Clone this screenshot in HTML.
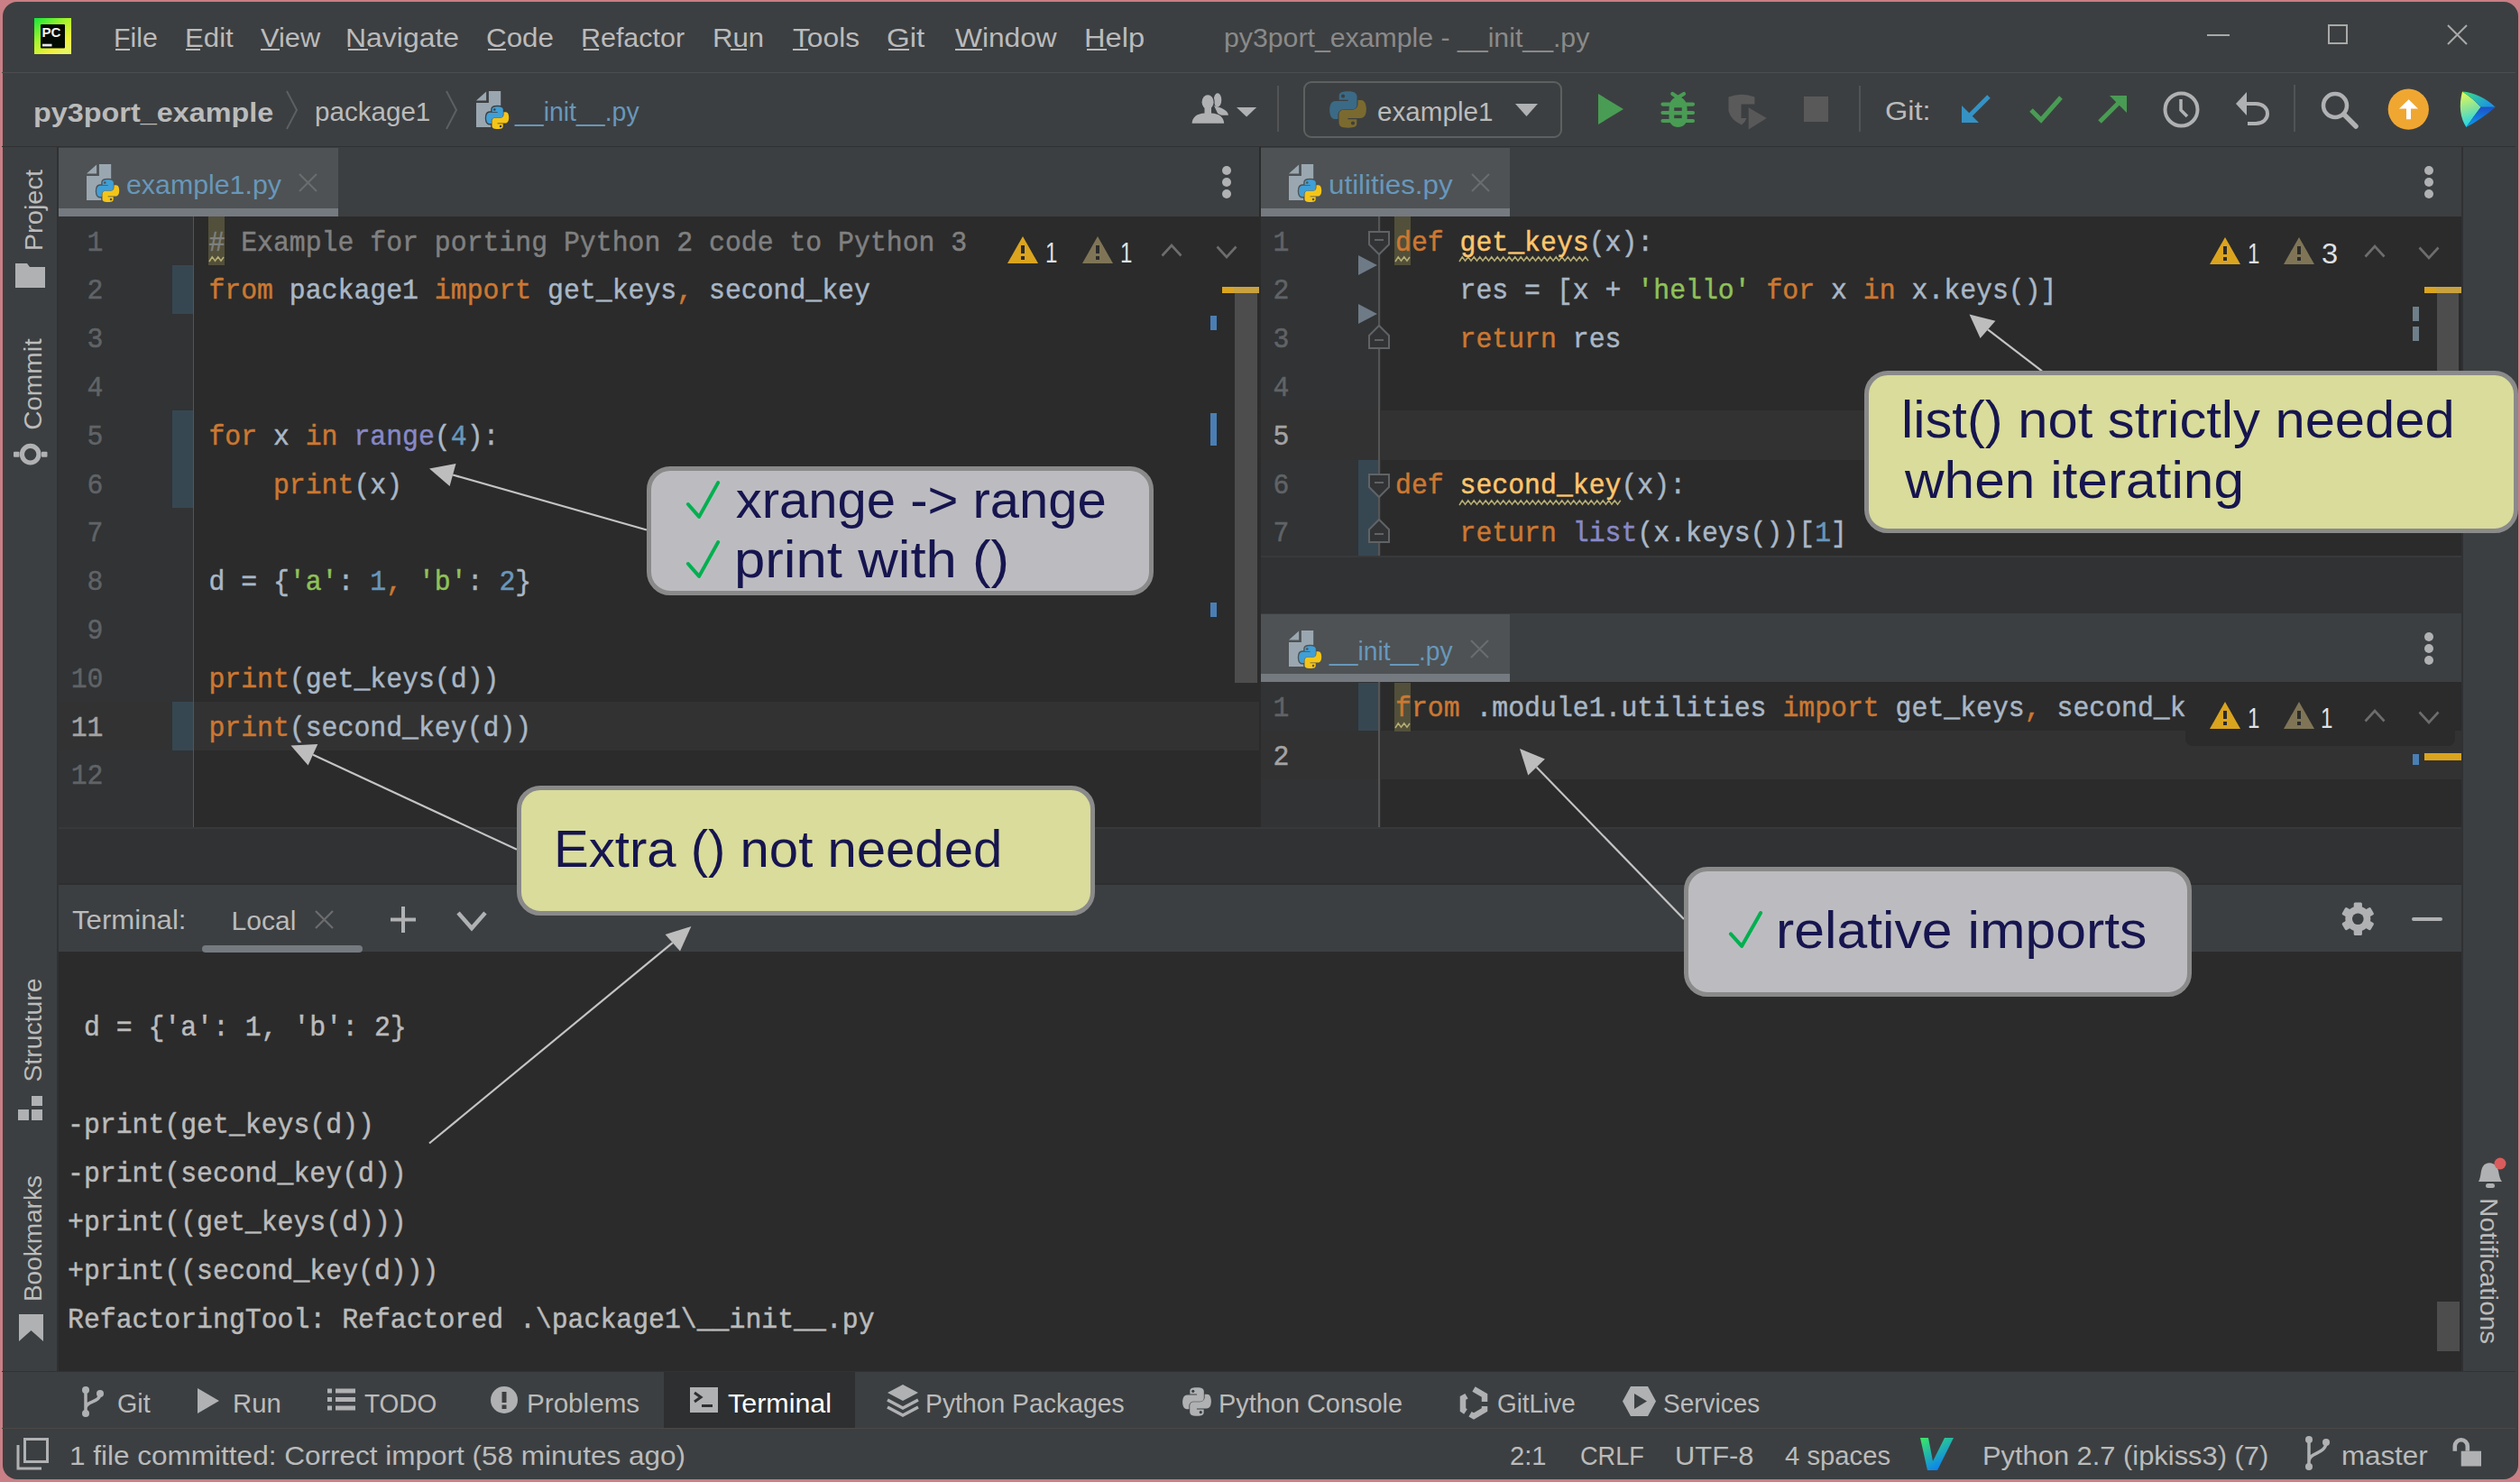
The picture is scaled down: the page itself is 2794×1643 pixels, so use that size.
<!DOCTYPE html>
<html><head><meta charset="utf-8">
<style>
html,body{margin:0;padding:0}
body{width:2794px;height:1643px;background:#c97f85;position:relative;overflow:hidden;font-family:"Liberation Sans",sans-serif}
.a{position:absolute}
.t{white-space:pre}
.m{-webkit-text-stroke-width:0.45px}
svg{overflow:visible}
</style></head><body>
<div class="a" style="left:2.5px;top:2.4px;width:2789px;height:1637.4px;background:#3c3f41;border-radius:16px"></div>
<div class="a" style="left:2px;top:80px;width:2787px;height:1px;background:#4b4c4d;"></div>
<div class="a" style="left:2px;top:162px;width:2787px;height:1px;background:#2f3133;"></div>
<div class="a" style="left:63px;top:163px;width:2px;height:1357px;background:#2f3133;"></div>
<div class="a" style="left:2729px;top:163px;width:2px;height:1357px;background:#2f3133;"></div>
<div class="a" style="left:65px;top:163px;width:1331px;height:76px;background:#3c3f41;"></div>
<div class="a" style="left:65px;top:164px;width:310px;height:75px;background:#4e5254;"></div>
<div class="a" style="left:65px;top:231px;width:310px;height:9px;background:#747a80;"></div>
<div class="a" style="left:65px;top:240px;width:149px;height:677px;background:#313335;"></div>
<div class="a" style="left:214px;top:240px;width:1px;height:677px;background:#555555;"></div>
<div class="a" style="left:215px;top:240px;width:1181px;height:677px;background:#2b2b2b;"></div>
<div class="a" style="left:65px;top:778px;width:149px;height:54px;background:#323232;"></div>
<div class="a" style="left:215px;top:778px;width:1181px;height:54px;background:#323232;"></div>
<div class="a" style="left:1396px;top:163px;width:2px;height:754px;background:#2b2b2b;"></div>
<div class="a" style="left:1398px;top:164px;width:276px;height:75px;background:#4e5254;"></div>
<div class="a" style="left:1398px;top:231px;width:276px;height:9px;background:#747a80;"></div>
<div class="a" style="left:1398px;top:240px;width:133px;height:376px;background:#313335;"></div>
<div class="a" style="left:1531px;top:240px;width:1198px;height:376px;background:#2b2b2b;"></div>
<div class="a" style="left:1531px;top:455px;width:1198px;height:55px;background:#323232;"></div>
<div class="a" style="left:1398px;top:455px;width:133px;height:55px;background:#323232;"></div>
<div class="a" style="left:1398px;top:616px;width:1331px;height:64px;background:#303234;"></div>
<div class="a" style="left:1398px;top:680px;width:1331px;height:76px;background:#3c3f41;"></div>
<div class="a" style="left:1398px;top:681px;width:276px;height:75px;background:#4e5254;"></div>
<div class="a" style="left:1398px;top:747px;width:276px;height:9px;background:#747a80;"></div>
<div class="a" style="left:1398px;top:756px;width:133px;height:161px;background:#313335;"></div>
<div class="a" style="left:1531px;top:756px;width:1198px;height:161px;background:#2b2b2b;"></div>
<div class="a" style="left:1531px;top:810px;width:1198px;height:54px;background:#323232;"></div>
<div class="a" style="left:1398px;top:810px;width:133px;height:54px;background:#323232;"></div>
<div class="a" style="left:65px;top:917px;width:2664px;height:63px;background:#303234;"></div>
<div class="a" style="left:65px;top:917px;width:2664px;height:2px;background:#38393b;"></div>
<div class="a" style="left:1398px;top:616px;width:1331px;height:2px;background:#38393b;"></div>
<div class="a" style="left:65px;top:979px;width:2664px;height:2px;background:#2c2e30;"></div>
<div class="a" style="left:65px;top:981px;width:2664px;height:74px;background:#3c3f41;"></div>
<div class="a" style="left:65px;top:1055px;width:2664px;height:465px;background:#2b2b2b;"></div>
<div class="a" style="left:2px;top:1520px;width:2787px;height:1px;background:#323232;"></div>
<div class="a" style="left:2px;top:1583px;width:2787px;height:1px;background:#4a4847;"></div>
<div class="a" style="left:736px;top:1521px;width:212px;height:62px;background:#2d2f30;"></div>
<svg class="a" style="left:38px;top:20px;" width="41" height="40" viewBox="0 0 41 40"><defs><linearGradient id="pcg" x1="0" y1="0" x2="0.75" y2="1"><stop offset="0" stop-color="#10e83a"/><stop offset="0.45" stop-color="#a6f52a"/><stop offset="0.8" stop-color="#f1f03a"/><stop offset="1" stop-color="#e8f560"/></linearGradient></defs><rect x="0" y="0" width="41" height="40" fill="url(#pcg)"/><rect x="7" y="7" width="27" height="26.5" rx="1" fill="#020a02"/><text x="8.5" y="20.8" font-family="Liberation Sans" font-weight="700" font-size="15.5" fill="#f2f2f2" textLength="21" lengthAdjust="spacingAndGlyphs">PC</text><rect x="9" y="28.7" width="10.5" height="2.8" fill="#e6e6e6"/></svg>
<div class="a" style="left:2447px;top:38px;width:25px;height:2px;background:#a9a9a9;"></div>
<div class="a" style="left:2581px;top:27px;width:22px;height:22px;background:transparent;border:2px solid #a9a9a9;box-sizing:border-box"></div>
<svg class="a" style="left:2713px;top:27px;" width="23" height="23" viewBox="0 0 23 23"><path d="M1 1 L22 22 M22 1 L1 22" stroke="#a9a9a9" stroke-width="2"/></svg>
<svg class="a" style="left:317px;top:101px;" width="13" height="42" viewBox="0 0 13 42"><path d="M1 0 L12 21 L1 42" fill="none" stroke="#5d5f61" stroke-width="2"/></svg>
<svg class="a" style="left:494px;top:101px;" width="13" height="42" viewBox="0 0 13 42"><path d="M1 0 L12 21 L1 42" fill="none" stroke="#5d5f61" stroke-width="2"/></svg>
<svg class="a" style="left:528px;top:101px;" width="28" height="40" viewBox="0 0 28 40"><path d="M0 10.4 L11.1 0.4 V10.4 Z" fill="#9aa7b0"/><path d="M13.9 0 H27.2 V40 H0 V13 H13.9 Z" fill="#9aa7b0"/></svg>
<svg class="a" style="left:537.7px;top:116.7px;" width="29" height="29" viewBox="0 0 29 29"><g transform="translate(1 1) scale(0.2292)"><g fill="#3c3f41" stroke="#3c3f41" stroke-width="12"><path d="M54.9 0.9 C50.3 0.9 45.9 1.3 42.1 2 C30.8 4 28.8 8.1 28.8 15.8 V26 H55.5 V29.4 H18.8 C11.1 29.4 4.3 34 2.2 42.9 C-0.2 53 -0.3 59.3 2.2 69.9 C4.1 77.8 8.6 83.4 16.3 83.4 H25.5 V71.3 C25.5 62.5 33.1 54.7 42.1 54.7 H68.8 C76.2 54.7 82.1 48.6 82.1 41.2 V15.8 C82.1 8.6 76 3.2 68.8 2 C64.2 1.2 59.5 0.9 54.9 0.9 Z"/><path d="M54.9 0.9 C50.3 0.9 45.9 1.3 42.1 2 C30.8 4 28.8 8.1 28.8 15.8 V26 H55.5 V29.4 H18.8 C11.1 29.4 4.3 34 2.2 42.9 C-0.2 53 -0.3 59.3 2.2 69.9 C4.1 77.8 8.6 83.4 16.3 83.4 H25.5 V71.3 C25.5 62.5 33.1 54.7 42.1 54.7 H68.8 C76.2 54.7 82.1 48.6 82.1 41.2 V15.8 C82.1 8.6 76 3.2 68.8 2 C64.2 1.2 59.5 0.9 54.9 0.9 Z" transform="rotate(180 55.2 55.2)"/></g><path d="M54.9 0.9 C50.3 0.9 45.9 1.3 42.1 2 C30.8 4 28.8 8.1 28.8 15.8 V26 H55.5 V29.4 H18.8 C11.1 29.4 4.3 34 2.2 42.9 C-0.2 53 -0.3 59.3 2.2 69.9 C4.1 77.8 8.6 83.4 16.3 83.4 H25.5 V71.3 C25.5 62.5 33.1 54.7 42.1 54.7 H68.8 C76.2 54.7 82.1 48.6 82.1 41.2 V15.8 C82.1 8.6 76 3.2 68.8 2 C64.2 1.2 59.5 0.9 54.9 0.9 Z" fill="#3f9fd6"/><path d="M54.9 0.9 C50.3 0.9 45.9 1.3 42.1 2 C30.8 4 28.8 8.1 28.8 15.8 V26 H55.5 V29.4 H18.8 C11.1 29.4 4.3 34 2.2 42.9 C-0.2 53 -0.3 59.3 2.2 69.9 C4.1 77.8 8.6 83.4 16.3 83.4 H25.5 V71.3 C25.5 62.5 33.1 54.7 42.1 54.7 H68.8 C76.2 54.7 82.1 48.6 82.1 41.2 V15.8 C82.1 8.6 76 3.2 68.8 2 C64.2 1.2 59.5 0.9 54.9 0.9 Z" fill="#f4c519" transform="rotate(180 55.2 55.2)"/><circle cx="40.5" cy="14.9" r="5.5" fill="#3c3f41"/><circle cx="69.9" cy="95.5" r="5.5" fill="#3c3f41"/></g></svg>
<svg class="a" style="left:1315px;top:98px;" width="50" height="44" viewBox="0 0 50 44"><ellipse cx="35" cy="12.8" rx="4.3" ry="7.6" fill="#afb1b3"/><path d="M31 19 L37 21 C43 23 46.5 26 46.9 29.7 L36 29.7 Z" fill="#afb1b3"/><g stroke="#3c3f41" stroke-width="2.2"><ellipse cx="24.1" cy="15.2" rx="6.5" ry="8" fill="#afb1b3"/><path d="M20.5 21 H28 V27.5 C36.5 28 41.8 31.5 42.2 38.8 H6.6 C7 31.5 12.5 28 20.5 27.5 Z" fill="#afb1b3"/></g><ellipse cx="24.1" cy="15.2" rx="6.5" ry="8" fill="#afb1b3"/><path d="M20.5 21 H28 V27.5 C36.5 28 41.8 31.5 42.2 38.8 H6.6 C7 31.5 12.5 28 20.5 27.5 Z" fill="#afb1b3"/></svg>
<svg class="a" style="left:1371px;top:119px;" width="23" height="11" viewBox="0 0 23 11"><path d="M0 0 H22.2 L11.1 10.4 Z" fill="#afb1b3"/></svg>
<div class="a" style="left:1416px;top:95px;width:2px;height:51px;background:#515354;"></div>
<div class="a" style="left:1445px;top:90px;width:287px;height:63px;border:2.5px solid #5e6060;border-radius:9px;box-sizing:border-box"></div>
<svg class="a" style="left:1473px;top:100px;" width="45" height="45" viewBox="0 0 45 45"><g transform="translate(1 1) scale(0.3714)"><path d="M54.9 0.9 C50.3 0.9 45.9 1.3 42.1 2 C30.8 4 28.8 8.1 28.8 15.8 V26 H55.5 V29.4 H18.8 C11.1 29.4 4.3 34 2.2 42.9 C-0.2 53 -0.3 59.3 2.2 69.9 C4.1 77.8 8.6 83.4 16.3 83.4 H25.5 V71.3 C25.5 62.5 33.1 54.7 42.1 54.7 H68.8 C76.2 54.7 82.1 48.6 82.1 41.2 V15.8 C82.1 8.6 76 3.2 68.8 2 C64.2 1.2 59.5 0.9 54.9 0.9 Z" fill="#3b6a86"/><path d="M54.9 0.9 C50.3 0.9 45.9 1.3 42.1 2 C30.8 4 28.8 8.1 28.8 15.8 V26 H55.5 V29.4 H18.8 C11.1 29.4 4.3 34 2.2 42.9 C-0.2 53 -0.3 59.3 2.2 69.9 C4.1 77.8 8.6 83.4 16.3 83.4 H25.5 V71.3 C25.5 62.5 33.1 54.7 42.1 54.7 H68.8 C76.2 54.7 82.1 48.6 82.1 41.2 V15.8 C82.1 8.6 76 3.2 68.8 2 C64.2 1.2 59.5 0.9 54.9 0.9 Z" fill="#7b6a2f" transform="rotate(180 55.2 55.2)"/><circle cx="40.5" cy="14.9" r="5.5" fill="#3c3f41"/><circle cx="69.9" cy="95.5" r="5.5" fill="#3c3f41"/></g></svg>
<svg class="a" style="left:1680px;top:115px;" width="25" height="14" viewBox="0 0 25 14"><path d="M0 0 H25 L12.5 14 Z" fill="#afb1b3"/></svg>
<svg class="a" style="left:1772px;top:104px;" width="29" height="34" viewBox="0 0 29 34"><path d="M0 0 L28 17 L0 34 Z" fill="#499c54"/></svg>
<svg class="a" style="left:1835px;top:95px;" width="50" height="50" viewBox="0 0 50 50"><path d="M19.3 9 L25.3 13 L32 9" fill="none" stroke="#499c54" stroke-width="4.2" stroke-linecap="round" stroke-linejoin="round"/><path d="M25.5 12.5 C31 12.5 35.6 17 35.6 26 V36 C35.6 42 31 46 25.5 46 C20 46 15.5 42 15.5 36 V26 C15.5 17 20 12.5 25.5 12.5 Z" fill="#499c54"/><path d="M8.5 20.6 H42 M8.5 30 H42 M8.5 39 H42" stroke="#499c54" stroke-width="4.2" stroke-linecap="round"/><rect x="21.2" y="24.3" width="8.5" height="3.6" fill="#3c3f41"/><rect x="21.2" y="32.5" width="8.5" height="3.6" fill="#3c3f41"/></svg>
<svg class="a" style="left:1835px;top:95px;" width="130" height="50" viewBox="0 0 130 50"><path d="M81.5 12.5 Q96 7 110.4 12.5 V20.5 H95.5 V36 H101.5 Q100 40.5 96 43.5 Q84 38 81.5 28 Z" fill="#5a5a5a"/><path d="M103.7 24.3 L123.8 36 L103.7 48.5 Z" fill="#585858"/></svg>
<div class="a" style="left:2000px;top:107px;width:27px;height:28px;background:#595959;"></div>
<div class="a" style="left:2061px;top:95px;width:2px;height:51px;background:#515354;"></div>
<svg class="a" style="left:2175px;top:105px;" width="32" height="31" viewBox="0 0 32 31"><path d="M30 2 L5 27" stroke="#3592c4" stroke-width="5"/><path d="M0 12 V31 H19 Z" fill="#3592c4"/></svg>
<svg class="a" style="left:2250px;top:105px;" width="37" height="31" viewBox="0 0 37 31"><path d="M2 17 L13 28 L35 3" fill="none" stroke="#499c54" stroke-width="5"/></svg>
<svg class="a" style="left:2326px;top:106px;" width="32" height="31" viewBox="0 0 32 31"><path d="M2 29 L27 4" stroke="#499c54" stroke-width="5"/><path d="M13 0 H32 V19 Z" fill="#499c54"/></svg>
<svg class="a" style="left:2398px;top:101px;" width="41" height="41" viewBox="0 0 41 41"><circle cx="20.5" cy="20.5" r="18" fill="none" stroke="#afb1b3" stroke-width="4"/><path d="M20 9 V21 L27 28" fill="none" stroke="#afb1b3" stroke-width="3.5"/></svg>
<svg class="a" style="left:2479px;top:102px;" width="38" height="37" viewBox="0 0 38 37"><path d="M10 13 H22 C30 13 35 18 35 24 S30 35 22 35 H13" fill="none" stroke="#afb1b3" stroke-width="4"/><path d="M0 13 L12 0 V26 Z" fill="#afb1b3"/></svg>
<div class="a" style="left:2543px;top:94px;width:2px;height:52px;background:#515354;"></div>
<svg class="a" style="left:2573px;top:101px;" width="42" height="41" viewBox="0 0 42 41"><circle cx="16" cy="16" r="13" fill="none" stroke="#afb1b3" stroke-width="4.5"/><path d="M26 26 L39 39" stroke="#afb1b3" stroke-width="5.5" stroke-linecap="round"/></svg>
<svg class="a" style="left:2640px;top:92px;" width="60" height="60" viewBox="0 0 60 60"><circle cx="30.3" cy="29.2" r="22.6" fill="#f0a732"/><path d="M30.6 18.3 L41 28.6 H33 V40.3 H28 V28.6 H20 Z" fill="#fff"/></svg>
<svg class="a" style="left:2720px;top:95px;" width="52" height="52" viewBox="0 0 52 52"><defs><linearGradient id="jl" x1="0" y1="0" x2="0.2" y2="1"><stop offset="0" stop-color="#eefc50"/><stop offset="0.55" stop-color="#86e39a"/><stop offset="1" stop-color="#1fd6e8"/></linearGradient><linearGradient id="jt" x1="0" y1="0" x2="1" y2="0.6"><stop offset="0" stop-color="#3ee07a"/><stop offset="1" stop-color="#1a95e6"/></linearGradient><linearGradient id="jb" x1="0" y1="0" x2="0" y2="1"><stop offset="0" stop-color="#1c50c8"/><stop offset="1" stop-color="#0a9cf0"/></linearGradient></defs><path d="M10 6.4 Q22 14 30.5 23.7 Q22 35 14.4 45.9 Q4 30 10 6.4 Z" fill="url(#jl)"/><path d="M10 6.4 Q30 8 46.7 23.7 H30.5 Q22 14 10 6.4 Z" fill="url(#jt)"/><path d="M30.5 23.7 H46.7 Q30 38 14.4 45.9 Q22 35 30.5 23.7 Z" fill="url(#jb)"/></svg>
<svg class="a" style="left:96px;top:182px;" width="28" height="40" viewBox="0 0 28 40"><path d="M0 10.4 L11.1 0.4 V10.4 Z" fill="#9aa7b0"/><path d="M13.9 0 H27.2 V40 H0 V13 H13.9 Z" fill="#9aa7b0"/></svg>
<svg class="a" style="left:105.7px;top:197.7px;" width="29" height="29" viewBox="0 0 29 29"><g transform="translate(1 1) scale(0.2292)"><g fill="#4e5254" stroke="#4e5254" stroke-width="12"><path d="M54.9 0.9 C50.3 0.9 45.9 1.3 42.1 2 C30.8 4 28.8 8.1 28.8 15.8 V26 H55.5 V29.4 H18.8 C11.1 29.4 4.3 34 2.2 42.9 C-0.2 53 -0.3 59.3 2.2 69.9 C4.1 77.8 8.6 83.4 16.3 83.4 H25.5 V71.3 C25.5 62.5 33.1 54.7 42.1 54.7 H68.8 C76.2 54.7 82.1 48.6 82.1 41.2 V15.8 C82.1 8.6 76 3.2 68.8 2 C64.2 1.2 59.5 0.9 54.9 0.9 Z"/><path d="M54.9 0.9 C50.3 0.9 45.9 1.3 42.1 2 C30.8 4 28.8 8.1 28.8 15.8 V26 H55.5 V29.4 H18.8 C11.1 29.4 4.3 34 2.2 42.9 C-0.2 53 -0.3 59.3 2.2 69.9 C4.1 77.8 8.6 83.4 16.3 83.4 H25.5 V71.3 C25.5 62.5 33.1 54.7 42.1 54.7 H68.8 C76.2 54.7 82.1 48.6 82.1 41.2 V15.8 C82.1 8.6 76 3.2 68.8 2 C64.2 1.2 59.5 0.9 54.9 0.9 Z" transform="rotate(180 55.2 55.2)"/></g><path d="M54.9 0.9 C50.3 0.9 45.9 1.3 42.1 2 C30.8 4 28.8 8.1 28.8 15.8 V26 H55.5 V29.4 H18.8 C11.1 29.4 4.3 34 2.2 42.9 C-0.2 53 -0.3 59.3 2.2 69.9 C4.1 77.8 8.6 83.4 16.3 83.4 H25.5 V71.3 C25.5 62.5 33.1 54.7 42.1 54.7 H68.8 C76.2 54.7 82.1 48.6 82.1 41.2 V15.8 C82.1 8.6 76 3.2 68.8 2 C64.2 1.2 59.5 0.9 54.9 0.9 Z" fill="#3f9fd6"/><path d="M54.9 0.9 C50.3 0.9 45.9 1.3 42.1 2 C30.8 4 28.8 8.1 28.8 15.8 V26 H55.5 V29.4 H18.8 C11.1 29.4 4.3 34 2.2 42.9 C-0.2 53 -0.3 59.3 2.2 69.9 C4.1 77.8 8.6 83.4 16.3 83.4 H25.5 V71.3 C25.5 62.5 33.1 54.7 42.1 54.7 H68.8 C76.2 54.7 82.1 48.6 82.1 41.2 V15.8 C82.1 8.6 76 3.2 68.8 2 C64.2 1.2 59.5 0.9 54.9 0.9 Z" fill="#f4c519" transform="rotate(180 55.2 55.2)"/><circle cx="40.5" cy="14.9" r="5.5" fill="#4e5254"/><circle cx="69.9" cy="95.5" r="5.5" fill="#4e5254"/></g></svg>
<svg class="a" style="left:1429.3px;top:182px;" width="28" height="40" viewBox="0 0 28 40"><path d="M0 10.4 L11.1 0.4 V10.4 Z" fill="#9aa7b0"/><path d="M13.9 0 H27.2 V40 H0 V13 H13.9 Z" fill="#9aa7b0"/></svg>
<svg class="a" style="left:1439.0px;top:197.7px;" width="29" height="29" viewBox="0 0 29 29"><g transform="translate(1 1) scale(0.2292)"><g fill="#4e5254" stroke="#4e5254" stroke-width="12"><path d="M54.9 0.9 C50.3 0.9 45.9 1.3 42.1 2 C30.8 4 28.8 8.1 28.8 15.8 V26 H55.5 V29.4 H18.8 C11.1 29.4 4.3 34 2.2 42.9 C-0.2 53 -0.3 59.3 2.2 69.9 C4.1 77.8 8.6 83.4 16.3 83.4 H25.5 V71.3 C25.5 62.5 33.1 54.7 42.1 54.7 H68.8 C76.2 54.7 82.1 48.6 82.1 41.2 V15.8 C82.1 8.6 76 3.2 68.8 2 C64.2 1.2 59.5 0.9 54.9 0.9 Z"/><path d="M54.9 0.9 C50.3 0.9 45.9 1.3 42.1 2 C30.8 4 28.8 8.1 28.8 15.8 V26 H55.5 V29.4 H18.8 C11.1 29.4 4.3 34 2.2 42.9 C-0.2 53 -0.3 59.3 2.2 69.9 C4.1 77.8 8.6 83.4 16.3 83.4 H25.5 V71.3 C25.5 62.5 33.1 54.7 42.1 54.7 H68.8 C76.2 54.7 82.1 48.6 82.1 41.2 V15.8 C82.1 8.6 76 3.2 68.8 2 C64.2 1.2 59.5 0.9 54.9 0.9 Z" transform="rotate(180 55.2 55.2)"/></g><path d="M54.9 0.9 C50.3 0.9 45.9 1.3 42.1 2 C30.8 4 28.8 8.1 28.8 15.8 V26 H55.5 V29.4 H18.8 C11.1 29.4 4.3 34 2.2 42.9 C-0.2 53 -0.3 59.3 2.2 69.9 C4.1 77.8 8.6 83.4 16.3 83.4 H25.5 V71.3 C25.5 62.5 33.1 54.7 42.1 54.7 H68.8 C76.2 54.7 82.1 48.6 82.1 41.2 V15.8 C82.1 8.6 76 3.2 68.8 2 C64.2 1.2 59.5 0.9 54.9 0.9 Z" fill="#3f9fd6"/><path d="M54.9 0.9 C50.3 0.9 45.9 1.3 42.1 2 C30.8 4 28.8 8.1 28.8 15.8 V26 H55.5 V29.4 H18.8 C11.1 29.4 4.3 34 2.2 42.9 C-0.2 53 -0.3 59.3 2.2 69.9 C4.1 77.8 8.6 83.4 16.3 83.4 H25.5 V71.3 C25.5 62.5 33.1 54.7 42.1 54.7 H68.8 C76.2 54.7 82.1 48.6 82.1 41.2 V15.8 C82.1 8.6 76 3.2 68.8 2 C64.2 1.2 59.5 0.9 54.9 0.9 Z" fill="#f4c519" transform="rotate(180 55.2 55.2)"/><circle cx="40.5" cy="14.9" r="5.5" fill="#4e5254"/><circle cx="69.9" cy="95.5" r="5.5" fill="#4e5254"/></g></svg>
<svg class="a" style="left:1429.3px;top:699px;" width="28" height="40" viewBox="0 0 28 40"><path d="M0 10.4 L11.1 0.4 V10.4 Z" fill="#9aa7b0"/><path d="M13.9 0 H27.2 V40 H0 V13 H13.9 Z" fill="#9aa7b0"/></svg>
<svg class="a" style="left:1439.0px;top:714.7px;" width="29" height="29" viewBox="0 0 29 29"><g transform="translate(1 1) scale(0.2292)"><g fill="#4e5254" stroke="#4e5254" stroke-width="12"><path d="M54.9 0.9 C50.3 0.9 45.9 1.3 42.1 2 C30.8 4 28.8 8.1 28.8 15.8 V26 H55.5 V29.4 H18.8 C11.1 29.4 4.3 34 2.2 42.9 C-0.2 53 -0.3 59.3 2.2 69.9 C4.1 77.8 8.6 83.4 16.3 83.4 H25.5 V71.3 C25.5 62.5 33.1 54.7 42.1 54.7 H68.8 C76.2 54.7 82.1 48.6 82.1 41.2 V15.8 C82.1 8.6 76 3.2 68.8 2 C64.2 1.2 59.5 0.9 54.9 0.9 Z"/><path d="M54.9 0.9 C50.3 0.9 45.9 1.3 42.1 2 C30.8 4 28.8 8.1 28.8 15.8 V26 H55.5 V29.4 H18.8 C11.1 29.4 4.3 34 2.2 42.9 C-0.2 53 -0.3 59.3 2.2 69.9 C4.1 77.8 8.6 83.4 16.3 83.4 H25.5 V71.3 C25.5 62.5 33.1 54.7 42.1 54.7 H68.8 C76.2 54.7 82.1 48.6 82.1 41.2 V15.8 C82.1 8.6 76 3.2 68.8 2 C64.2 1.2 59.5 0.9 54.9 0.9 Z" transform="rotate(180 55.2 55.2)"/></g><path d="M54.9 0.9 C50.3 0.9 45.9 1.3 42.1 2 C30.8 4 28.8 8.1 28.8 15.8 V26 H55.5 V29.4 H18.8 C11.1 29.4 4.3 34 2.2 42.9 C-0.2 53 -0.3 59.3 2.2 69.9 C4.1 77.8 8.6 83.4 16.3 83.4 H25.5 V71.3 C25.5 62.5 33.1 54.7 42.1 54.7 H68.8 C76.2 54.7 82.1 48.6 82.1 41.2 V15.8 C82.1 8.6 76 3.2 68.8 2 C64.2 1.2 59.5 0.9 54.9 0.9 Z" fill="#3f9fd6"/><path d="M54.9 0.9 C50.3 0.9 45.9 1.3 42.1 2 C30.8 4 28.8 8.1 28.8 15.8 V26 H55.5 V29.4 H18.8 C11.1 29.4 4.3 34 2.2 42.9 C-0.2 53 -0.3 59.3 2.2 69.9 C4.1 77.8 8.6 83.4 16.3 83.4 H25.5 V71.3 C25.5 62.5 33.1 54.7 42.1 54.7 H68.8 C76.2 54.7 82.1 48.6 82.1 41.2 V15.8 C82.1 8.6 76 3.2 68.8 2 C64.2 1.2 59.5 0.9 54.9 0.9 Z" fill="#f4c519" transform="rotate(180 55.2 55.2)"/><circle cx="40.5" cy="14.9" r="5.5" fill="#4e5254"/><circle cx="69.9" cy="95.5" r="5.5" fill="#4e5254"/></g></svg>
<svg class="a" style="left:331px;top:192px;" width="21" height="21" viewBox="0 0 21 21"><path d="M1 1 L20 20 M20 1 L1 20" stroke="#6a6c6e" stroke-width="2.2"/></svg>
<svg class="a" style="left:1631px;top:192px;" width="21" height="21" viewBox="0 0 21 21"><path d="M1 1 L20 20 M20 1 L1 20" stroke="#6a6c6e" stroke-width="2.2"/></svg>
<svg class="a" style="left:1630px;top:709px;" width="21" height="21" viewBox="0 0 21 21"><path d="M1 1 L20 20 M20 1 L1 20" stroke="#6a6c6e" stroke-width="2.2"/></svg>
<svg class="a" style="left:1354px;top:183px;" width="12" height="40" viewBox="0 0 12 40"><circle cx="6" cy="6" r="5" fill="#afb1b3"/><circle cx="6" cy="19" r="5" fill="#afb1b3"/><circle cx="6" cy="32" r="5" fill="#afb1b3"/></svg>
<svg class="a" style="left:2686.5px;top:183px;" width="12" height="40" viewBox="0 0 12 40"><circle cx="6" cy="6" r="5" fill="#afb1b3"/><circle cx="6" cy="19" r="5" fill="#afb1b3"/><circle cx="6" cy="32" r="5" fill="#afb1b3"/></svg>
<svg class="a" style="left:2686.5px;top:700px;" width="12" height="40" viewBox="0 0 12 40"><circle cx="6" cy="6" r="5" fill="#afb1b3"/><circle cx="6" cy="19" r="5" fill="#afb1b3"/><circle cx="6" cy="32" r="5" fill="#afb1b3"/></svg>
<svg class="a" style="left:1117px;top:262px;" width="34" height="31" viewBox="0 0 34 31"><path d="M17 0 L34 30 H0 Z" fill="#dba41f"/><rect x="15" y="10" width="4" height="9" fill="#2b2b2b"/><rect x="15" y="22" width="4" height="4" fill="#2b2b2b"/></svg>
<div class="a t" style="left:1159.19px;top:262.53px;font-family:'Liberation Sans',sans-serif;font-size:32px;line-height:35.75px;color:#dfe1e5;font-weight:400;transform:scale(0.7543,1.0000);transform-origin:0 28.97px;">1</div>
<svg class="a" style="left:1200px;top:262px;" width="34" height="31" viewBox="0 0 34 31"><path d="M17 0 L34 30 H0 Z" fill="#7f7556"/><rect x="15" y="10" width="4" height="9" fill="#2b2b2b"/><rect x="15" y="22" width="4" height="4" fill="#2b2b2b"/></svg>
<div class="a t" style="left:1242.19px;top:262.53px;font-family:'Liberation Sans',sans-serif;font-size:32px;line-height:35.75px;color:#dfe1e5;font-weight:400;transform:scale(0.7543,1.0000);transform-origin:0 28.97px;">1</div>
<svg class="a" style="left:1287px;top:270px;" width="24" height="15" viewBox="0 0 24 15"><path d="M1.5 13.5 L12 2 L22.5 13.5" fill="none" stroke="#6d6d6d" stroke-width="2.6"/></svg>
<svg class="a" style="left:1348px;top:272px;" width="24" height="15" viewBox="0 0 24 15"><path d="M1.5 1.5 L12 13 L22.5 1.5" fill="none" stroke="#6d6d6d" stroke-width="2.6"/></svg>
<svg class="a" style="left:2450px;top:263px;" width="34" height="31" viewBox="0 0 34 31"><path d="M17 0 L34 30 H0 Z" fill="#dba41f"/><rect x="15" y="10" width="4" height="9" fill="#2b2b2b"/><rect x="15" y="22" width="4" height="4" fill="#2b2b2b"/></svg>
<div class="a t" style="left:2491.69px;top:263.53px;font-family:'Liberation Sans',sans-serif;font-size:32px;line-height:35.75px;color:#dfe1e5;font-weight:400;transform:scale(0.7543,1.0000);transform-origin:0 28.97px;">1</div>
<svg class="a" style="left:2532px;top:263px;" width="34" height="31" viewBox="0 0 34 31"><path d="M17 0 L34 30 H0 Z" fill="#7f7556"/><rect x="15" y="10" width="4" height="9" fill="#2b2b2b"/><rect x="15" y="22" width="4" height="4" fill="#2b2b2b"/></svg>
<div class="a t" style="left:2573.69px;top:263.53px;font-family:'Liberation Sans',sans-serif;font-size:32px;line-height:35.75px;color:#dfe1e5;font-weight:400;transform:scale(1.0197,1.0000);transform-origin:0 28.97px;">3</div>
<svg class="a" style="left:2620.5px;top:271px;" width="24" height="15" viewBox="0 0 24 15"><path d="M1.5 13.5 L12 2 L22.5 13.5" fill="none" stroke="#6d6d6d" stroke-width="2.6"/></svg>
<svg class="a" style="left:2680.5px;top:273px;" width="24" height="15" viewBox="0 0 24 15"><path d="M1.5 1.5 L12 13 L22.5 1.5" fill="none" stroke="#6d6d6d" stroke-width="2.6"/></svg>
<div class="a" style="left:2423px;top:756px;width:299px;height:71px;background:#2b2b2b;border-radius:0 0 8px 8px"></div>
<svg class="a" style="left:2450px;top:778px;" width="34" height="31" viewBox="0 0 34 31"><path d="M17 0 L34 30 H0 Z" fill="#dba41f"/><rect x="15" y="10" width="4" height="9" fill="#2b2b2b"/><rect x="15" y="22" width="4" height="4" fill="#2b2b2b"/></svg>
<div class="a t" style="left:2491.69px;top:778.53px;font-family:'Liberation Sans',sans-serif;font-size:32px;line-height:35.75px;color:#dfe1e5;font-weight:400;transform:scale(0.7543,1.0000);transform-origin:0 28.97px;">1</div>
<svg class="a" style="left:2532px;top:778px;" width="34" height="31" viewBox="0 0 34 31"><path d="M17 0 L34 30 H0 Z" fill="#7f7556"/><rect x="15" y="10" width="4" height="9" fill="#2b2b2b"/><rect x="15" y="22" width="4" height="4" fill="#2b2b2b"/></svg>
<div class="a t" style="left:2573.19px;top:778.53px;font-family:'Liberation Sans',sans-serif;font-size:32px;line-height:35.75px;color:#dfe1e5;font-weight:400;transform:scale(0.7543,1.0000);transform-origin:0 28.97px;">1</div>
<svg class="a" style="left:2620.5px;top:786px;" width="24" height="15" viewBox="0 0 24 15"><path d="M1.5 13.5 L12 2 L22.5 13.5" fill="none" stroke="#6d6d6d" stroke-width="2.6"/></svg>
<svg class="a" style="left:2680.5px;top:788px;" width="24" height="15" viewBox="0 0 24 15"><path d="M1.5 1.5 L12 13 L22.5 1.5" fill="none" stroke="#6d6d6d" stroke-width="2.6"/></svg>
<div class="a" style="left:1355px;top:318px;width:41px;height:7px;background:#c9a23f;"></div>
<div class="a" style="left:1355px;top:318px;width:13px;height:7px;background:#dba41f;"></div>
<div class="a" style="left:1369px;top:325px;width:25px;height:432px;background:#4d4d4d;"></div>
<div class="a" style="left:1342px;top:350px;width:7px;height:16px;background:#4a7fb5;"></div>
<div class="a" style="left:1342px;top:458px;width:7px;height:36px;background:#4a7fb5;"></div>
<div class="a" style="left:1342px;top:668px;width:7px;height:16px;background:#4a7fb5;"></div>
<div class="a" style="left:2688px;top:318px;width:41px;height:7px;background:#c9a23f;"></div>
<div class="a" style="left:2688px;top:318px;width:13px;height:7px;background:#dba41f;"></div>
<div class="a" style="left:2702px;top:325px;width:24px;height:260px;background:#4d4d4d;"></div>
<div class="a" style="left:2675px;top:340px;width:7px;height:16px;background:#6e7f8a;"></div>
<div class="a" style="left:2675px;top:362px;width:7px;height:16px;background:#6e7f8a;"></div>
<div class="a" style="left:2688px;top:835px;width:41px;height:8px;background:#dba41f;"></div>
<div class="a" style="left:2675px;top:836px;width:7px;height:12px;background:#4a7fb5;"></div>
<div class="a" style="left:191px;top:294px;width:23px;height:54px;background:#374752;"></div>
<div class="a" style="left:191px;top:455px;width:23px;height:108px;background:#374752;"></div>
<div class="a" style="left:191px;top:778px;width:23px;height:54px;background:#374752;"></div>
<div class="a" style="left:1506px;top:510px;width:23px;height:106px;background:#374752;"></div>
<div class="a" style="left:1506px;top:757px;width:23px;height:53px;background:#374752;"></div>
<div class="a" style="left:231px;top:240px;width:18px;height:54px;background:#52503a;"></div>
<svg class="a" style="left:232px;top:283.5px;" width="16" height="7" viewBox="0 0 16 7"><path d="M0 6 L3.25 0.8 L6.5 5.2 L9.75 0.8 L13 5.2 L16 1" fill="none" stroke="#b5ad74" stroke-width="1.6"/></svg>
<div class="a" style="left:1546px;top:240px;width:18px;height:54px;background:#52503a;"></div>
<svg class="a" style="left:1547px;top:283.5px;" width="16" height="7" viewBox="0 0 16 7"><path d="M0 6 L3.25 0.8 L6.5 5.2 L9.75 0.8 L13 5.2 L16 1" fill="none" stroke="#b5ad74" stroke-width="1.6"/></svg>
<div class="a" style="left:1546px;top:757px;width:18px;height:54px;background:#52503a;"></div>
<svg class="a" style="left:1547px;top:800.5px;" width="16" height="7" viewBox="0 0 16 7"><path d="M0 6 L3.25 0.8 L6.5 5.2 L9.75 0.8 L13 5.2 L16 1" fill="none" stroke="#b5ad74" stroke-width="1.6"/></svg>
<svg class="a" style="left:1618px;top:283.5px;" width="145" height="7" viewBox="0 0 145 7"><path d="M0 6 L3.25 0.8 L6.50 5.2 L9.75 0.8 L13.00 5.2 L16.25 0.8 L19.50 5.2 L22.75 0.8 L26.00 5.2 L29.25 0.8 L32.50 5.2 L35.75 0.8 L39.00 5.2 L42.25 0.8 L45.50 5.2 L48.75 0.8 L52.00 5.2 L55.25 0.8 L58.50 5.2 L61.75 0.8 L65.00 5.2 L68.25 0.8 L71.50 5.2 L74.75 0.8 L78.00 5.2 L81.25 0.8 L84.50 5.2 L87.75 0.8 L91.00 5.2 L94.25 0.8 L97.50 5.2 L100.75 0.8 L104.00 5.2 L107.25 0.8 L110.50 5.2 L113.75 0.8 L117.00 5.2 L120.25 0.8 L123.50 5.2 L126.75 0.8 L130.00 5.2 L133.25 0.8 L136.50 5.2 L139.75 0.8 L143.00 5.2" fill="none" stroke="#b5ad74" stroke-width="1.6"/></svg>
<svg class="a" style="left:1618px;top:553.5px;" width="182" height="7" viewBox="0 0 182 7"><path d="M0 6 L3.25 0.8 L6.50 5.2 L9.75 0.8 L13.00 5.2 L16.25 0.8 L19.50 5.2 L22.75 0.8 L26.00 5.2 L29.25 0.8 L32.50 5.2 L35.75 0.8 L39.00 5.2 L42.25 0.8 L45.50 5.2 L48.75 0.8 L52.00 5.2 L55.25 0.8 L58.50 5.2 L61.75 0.8 L65.00 5.2 L68.25 0.8 L71.50 5.2 L74.75 0.8 L78.00 5.2 L81.25 0.8 L84.50 5.2 L87.75 0.8 L91.00 5.2 L94.25 0.8 L97.50 5.2 L100.75 0.8 L104.00 5.2 L107.25 0.8 L110.50 5.2 L113.75 0.8 L117.00 5.2 L120.25 0.8 L123.50 5.2 L126.75 0.8 L130.00 5.2 L133.25 0.8 L136.50 5.2 L139.75 0.8 L143.00 5.2 L146.25 0.8 L149.50 5.2 L152.75 0.8 L156.00 5.2 L159.25 0.8 L162.50 5.2 L165.75 0.8 L169.00 5.2 L172.25 0.8 L175.50 5.2 L178.75 0.8" fill="none" stroke="#b5ad74" stroke-width="1.6"/></svg>
<div class="a" style="left:1528px;top:240px;width:2px;height:376px;background:#555555;"></div>
<div class="a" style="left:1528px;top:756px;width:2px;height:161px;background:#555555;"></div>
<svg class="a" style="left:1517px;top:256px;" width="24" height="28" viewBox="0 0 24 28"><path d="M1 1 H23 V15 L12 26 L1 15 Z" fill="#313335" stroke="#606366" stroke-width="2"/><path d="M7 10 H17" stroke="#606366" stroke-width="2"/></svg>
<svg class="a" style="left:1517px;top:359px;" width="24" height="28" viewBox="0 0 24 28"><path d="M1 27 H23 V13 L12 2 L1 13 Z" fill="#313335" stroke="#606366" stroke-width="2"/><path d="M7 18 H17" stroke="#606366" stroke-width="2"/></svg>
<svg class="a" style="left:1517px;top:525px;" width="24" height="28" viewBox="0 0 24 28"><path d="M1 1 H23 V15 L12 26 L1 15 Z" fill="#313335" stroke="#606366" stroke-width="2"/><path d="M7 10 H17" stroke="#606366" stroke-width="2"/></svg>
<svg class="a" style="left:1517px;top:574px;" width="24" height="28" viewBox="0 0 24 28"><path d="M1 27 H23 V13 L12 2 L1 13 Z" fill="#313335" stroke="#606366" stroke-width="2"/><path d="M7 18 H17" stroke="#606366" stroke-width="2"/></svg>
<svg class="a" style="left:1506px;top:283px;" width="22" height="22" viewBox="0 0 22 22"><path d="M0 0 L21 11 L0 22 Z" fill="#6e7a86"/></svg>
<svg class="a" style="left:1506px;top:337px;" width="22" height="22" viewBox="0 0 22 22"><path d="M0 0 L21 11 L0 22 Z" fill="#6e7a86"/></svg>
<div class="a t" style="left:-4.5px;top:217.6px;width:84.0px;font-size:27px;line-height:30.2px;color:#bbbbbb;transform:rotate(-90deg) scaleX(1.075);transform-origin:50% 50%">Project</div>
<div class="a t" style="left:-9.0px;top:410.6px;width:93.0px;font-size:27px;line-height:30.2px;color:#bbbbbb;transform:rotate(-90deg) scaleX(1.090);transform-origin:50% 50%">Commit</div>
<div class="a t" style="left:-17.8px;top:1127.4px;width:109.5px;font-size:27px;line-height:30.2px;color:#bbbbbb;transform:rotate(-90deg) scaleX(1.050);transform-origin:50% 50%">Structure</div>
<div class="a t" style="left:-30.5px;top:1357.9px;width:135.0px;font-size:27px;line-height:30.2px;color:#bbbbbb;transform:rotate(-90deg) scaleX(1.037);transform-origin:50% 50%">Bookmarks</div>
<div class="a t" style="left:2684.5px;top:1393.9px;width:147.1px;font-size:27px;line-height:30.2px;color:#bbbbbb;transform:rotate(90deg) scaleX(1.102);transform-origin:50% 50%">Notifications</div>
<svg class="a" style="left:17px;top:292px;" width="34" height="28" viewBox="0 0 34 28"><path d="M0 0 H13 L16 4 H33 V27 H0 Z" fill="#afb1b3"/></svg>
<svg class="a" style="left:15px;top:491px;" width="38" height="26" viewBox="0 0 38 26"><circle cx="18.7" cy="12.7" r="9.3" fill="none" stroke="#afb1b3" stroke-width="5.2"/><rect x="0" y="9.7" width="6.5" height="6" rx="1" fill="#afb1b3"/><rect x="31" y="9.7" width="6.5" height="6" rx="1" fill="#afb1b3"/></svg>
<svg class="a" style="left:20px;top:1215px;" width="28" height="27" viewBox="0 0 28 27"><rect x="15" y="0" width="12" height="11" fill="#afb1b3"/><rect x="0" y="15" width="12" height="12" fill="#afb1b3"/><rect x="15" y="15" width="12" height="12" fill="#afb1b3"/></svg>
<svg class="a" style="left:21px;top:1457px;" width="27" height="30" viewBox="0 0 27 30"><path d="M0 0 H27 V30 L13.5 18 L0 30 Z" fill="#afb1b3"/></svg>
<svg class="a" style="left:2744px;top:1283px;" width="34" height="36" viewBox="0 0 34 36"><path d="M4 27 C7 22 6 14 9 10 C12 5 20 5 24 10 C27 14 26 22 30 27 Z" fill="#afb1b3"/><rect x="12" y="29" width="10" height="5" rx="2.5" fill="#afb1b3"/><circle cx="28" cy="7" r="6.5" fill="#db5c5c"/></svg>
<svg class="a" style="left:349px;top:1009px;" width="21" height="21" viewBox="0 0 21 21"><path d="M1 1 L20 20 M20 1 L1 20" stroke="#6a6c6e" stroke-width="2.2"/></svg>
<svg class="a" style="left:433px;top:1005px;" width="28" height="29" viewBox="0 0 28 29"><path d="M14 0 V29 M0 14.5 H28" stroke="#afb1b3" stroke-width="4"/></svg>
<svg class="a" style="left:506px;top:1010px;" width="34" height="22" viewBox="0 0 34 22"><path d="M2 2 L17 19 L32 2" fill="none" stroke="#afb1b3" stroke-width="4.5"/></svg>
<svg class="a" style="left:2595px;top:999px;" width="40" height="40" viewBox="0 0 40 40"><g transform="translate(19.3 19.7)"><circle r="14" fill="#afb1b3"/><rect x="-4.6" y="-18.3" width="9.2" height="8" rx="1.5" fill="#afb1b3" transform="rotate(0)"/><rect x="-4.6" y="-18.3" width="9.2" height="8" rx="1.5" fill="#afb1b3" transform="rotate(60)"/><rect x="-4.6" y="-18.3" width="9.2" height="8" rx="1.5" fill="#afb1b3" transform="rotate(120)"/><rect x="-4.6" y="-18.3" width="9.2" height="8" rx="1.5" fill="#afb1b3" transform="rotate(180)"/><rect x="-4.6" y="-18.3" width="9.2" height="8" rx="1.5" fill="#afb1b3" transform="rotate(240)"/><rect x="-4.6" y="-18.3" width="9.2" height="8" rx="1.5" fill="#afb1b3" transform="rotate(300)"/><circle r="6.3" fill="#3c3f41"/></g></svg>
<div class="a" style="left:2673.6px;top:1016.7px;width:34px;height:4.6px;background:#afb1b3;border-radius:2px"></div>
<div class="a" style="left:2702px;top:1443px;width:25px;height:55px;background:#4d4d4d;"></div>
<svg class="a" style="left:90px;top:1537px;" width="26" height="34" viewBox="0 0 26 34"><circle cx="5" cy="4" r="4" fill="#afb1b3"/><circle cx="5" cy="30" r="4" fill="#afb1b3"/><circle cx="21" cy="8" r="4" fill="#afb1b3"/><path d="M5 4 V30 M21 8 C21 18 5 16 5 24" fill="none" stroke="#afb1b3" stroke-width="3.5"/></svg>
<svg class="a" style="left:219px;top:1539px;" width="25" height="28" viewBox="0 0 25 28"><path d="M0 0 L24 14 L0 28 Z" fill="#afb1b3"/></svg>
<svg class="a" style="left:363px;top:1539px;" width="31" height="27" viewBox="0 0 31 27"><rect x="0" y="0.5" width="5" height="5" fill="#afb1b3"/><rect x="9" y="0.5" width="22" height="5" fill="#afb1b3"/><rect x="0" y="10" width="5" height="5" fill="#afb1b3"/><rect x="9" y="10" width="22" height="5" fill="#afb1b3"/><rect x="0" y="19.5" width="5" height="5" fill="#afb1b3"/><rect x="9" y="19.5" width="22" height="5" fill="#afb1b3"/></svg>
<svg class="a" style="left:544px;top:1537px;" width="30" height="30" viewBox="0 0 30 30"><circle cx="15" cy="15" r="15" fill="#afb1b3"/><rect x="12.5" y="6" width="5" height="12" fill="#3c3f41"/><rect x="12.5" y="20.5" width="5" height="4.5" fill="#3c3f41"/></svg>
<svg class="a" style="left:765px;top:1538px;" width="31" height="28" viewBox="0 0 31 28"><rect x="0" y="0" width="31" height="28" fill="#afb1b3"/><path d="M5 6 L12 11 L5 16" fill="none" stroke="#2d2f30" stroke-width="3"/><rect x="13" y="19" width="12" height="3" fill="#2d2f30"/></svg>
<svg class="a" style="left:984px;top:1535px;" width="34" height="36" viewBox="0 0 34 36"><path d="M17 0 L34 9 L17 18 L0 9 Z" fill="#afb1b3"/><path d="M0 17 L17 26 L34 17 M0 25 L17 34 L34 25" fill="none" stroke="#afb1b3" stroke-width="3.5"/></svg>
<svg class="a" style="left:1309.7px;top:1536.5px;" width="36" height="36" viewBox="0 0 36 36"><g transform="translate(1 1) scale(0.2899)"><g fill="#3c3f41" stroke="#3c3f41" stroke-width="12"><path d="M54.9 0.9 C50.3 0.9 45.9 1.3 42.1 2 C30.8 4 28.8 8.1 28.8 15.8 V26 H55.5 V29.4 H18.8 C11.1 29.4 4.3 34 2.2 42.9 C-0.2 53 -0.3 59.3 2.2 69.9 C4.1 77.8 8.6 83.4 16.3 83.4 H25.5 V71.3 C25.5 62.5 33.1 54.7 42.1 54.7 H68.8 C76.2 54.7 82.1 48.6 82.1 41.2 V15.8 C82.1 8.6 76 3.2 68.8 2 C64.2 1.2 59.5 0.9 54.9 0.9 Z"/><path d="M54.9 0.9 C50.3 0.9 45.9 1.3 42.1 2 C30.8 4 28.8 8.1 28.8 15.8 V26 H55.5 V29.4 H18.8 C11.1 29.4 4.3 34 2.2 42.9 C-0.2 53 -0.3 59.3 2.2 69.9 C4.1 77.8 8.6 83.4 16.3 83.4 H25.5 V71.3 C25.5 62.5 33.1 54.7 42.1 54.7 H68.8 C76.2 54.7 82.1 48.6 82.1 41.2 V15.8 C82.1 8.6 76 3.2 68.8 2 C64.2 1.2 59.5 0.9 54.9 0.9 Z" transform="rotate(180 55.2 55.2)"/></g><path d="M54.9 0.9 C50.3 0.9 45.9 1.3 42.1 2 C30.8 4 28.8 8.1 28.8 15.8 V26 H55.5 V29.4 H18.8 C11.1 29.4 4.3 34 2.2 42.9 C-0.2 53 -0.3 59.3 2.2 69.9 C4.1 77.8 8.6 83.4 16.3 83.4 H25.5 V71.3 C25.5 62.5 33.1 54.7 42.1 54.7 H68.8 C76.2 54.7 82.1 48.6 82.1 41.2 V15.8 C82.1 8.6 76 3.2 68.8 2 C64.2 1.2 59.5 0.9 54.9 0.9 Z" fill="#afb1b3"/><path d="M54.9 0.9 C50.3 0.9 45.9 1.3 42.1 2 C30.8 4 28.8 8.1 28.8 15.8 V26 H55.5 V29.4 H18.8 C11.1 29.4 4.3 34 2.2 42.9 C-0.2 53 -0.3 59.3 2.2 69.9 C4.1 77.8 8.6 83.4 16.3 83.4 H25.5 V71.3 C25.5 62.5 33.1 54.7 42.1 54.7 H68.8 C76.2 54.7 82.1 48.6 82.1 41.2 V15.8 C82.1 8.6 76 3.2 68.8 2 C64.2 1.2 59.5 0.9 54.9 0.9 Z" fill="#afb1b3" transform="rotate(180 55.2 55.2)"/><circle cx="40.5" cy="14.9" r="5.5" fill="#3c3f41"/><circle cx="69.9" cy="95.5" r="5.5" fill="#3c3f41"/></g></svg>
<svg class="a" style="left:1617px;top:1537px;" width="34" height="36" viewBox="0 0 34 36"><g fill="none" stroke="#afb1b3" stroke-width="6.5"><path d="M17 3 L29 10 V17"/><path d="M29 22 V26 L17 33 L13 30.7"/><path d="M8 28 L5 26 V13 L9 10.7"/></g></svg>
<svg class="a" style="left:1799px;top:1537px;" width="37" height="33" viewBox="0 0 37 33"><path d="M9 0 H28 L37 16.5 L28 33 H9 L0 16.5 Z" fill="#afb1b3"/><path d="M13 8 L27 16.5 L13 25 Z" fill="#3c3f41"/></svg>
<svg class="a" style="left:18px;top:1594px;" width="36" height="36" viewBox="0 0 36 36"><path d="M2 8 V34 H28" fill="none" stroke="#afb1b3" stroke-width="3"/><rect x="9.5" y="1.5" width="25" height="25" fill="none" stroke="#afb1b3" stroke-width="3"/></svg>
<svg class="a" style="left:2129px;top:1594px;" width="37" height="36" viewBox="0 0 37 36"><defs><linearGradient id="vg" x1="0" y1="0" x2="0.6" y2="1"><stop offset="0" stop-color="#3bea62"/><stop offset="1" stop-color="#087cfa"/></linearGradient></defs><path d="M0 0 H9 L14 26 L27 0 H37 L19 36 H8 Z" fill="url(#vg)"/></svg>
<svg class="a" style="left:2555px;top:1592px;" width="29" height="38" viewBox="0 0 29 38"><circle cx="5" cy="4" r="4" fill="#afb1b3"/><circle cx="5" cy="34" r="4" fill="#afb1b3"/><circle cx="24" cy="7" r="4" fill="#afb1b3"/><path d="M5 4 V34 M24 7 C24 20 5 18 5 28" fill="none" stroke="#afb1b3" stroke-width="3.5"/></svg>
<svg class="a" style="left:2714px;top:1590px;" width="40" height="40" viewBox="0 0 40 40"><path d="M7.8 18.7 V13.3 A7 7 0 0 1 21.8 13.3 V18.7" fill="none" stroke="#afb1b3" stroke-width="4.6"/><rect x="14.7" y="18.7" width="22.3" height="16.8" fill="#afb1b3"/></svg>
<div class="a t" style="left:125.58px;top:24.84px;font-family:'Liberation Sans',sans-serif;font-size:30px;line-height:33.52px;color:#bbbbbb;font-weight:400;transform:scale(1.0101,1.0000);transform-origin:0 27.16px;">File</div>
<div class="a t" style="left:204.50px;top:24.84px;font-family:'Liberation Sans',sans-serif;font-size:30px;line-height:33.52px;color:#bbbbbb;font-weight:400;transform:scale(1.0398,1.0000);transform-origin:0 27.16px;">Edit</div>
<div class="a t" style="left:288.85px;top:24.84px;font-family:'Liberation Sans',sans-serif;font-size:30px;line-height:33.52px;color:#bbbbbb;font-weight:400;transform:scale(1.0256,1.0000);transform-origin:0 27.16px;">View</div>
<div class="a t" style="left:383.45px;top:24.84px;font-family:'Liberation Sans',sans-serif;font-size:30px;line-height:33.52px;color:#bbbbbb;font-weight:400;transform:scale(1.0646,1.0000);transform-origin:0 27.16px;">Navigate</div>
<div class="a t" style="left:538.93px;top:24.84px;font-family:'Liberation Sans',sans-serif;font-size:30px;line-height:33.52px;color:#bbbbbb;font-weight:400;transform:scale(1.0458,1.0000);transform-origin:0 27.16px;">Code</div>
<div class="a t" style="left:644.27px;top:24.84px;font-family:'Liberation Sans',sans-serif;font-size:30px;line-height:33.52px;color:#bbbbbb;font-weight:400;transform:scale(1.0145,1.0000);transform-origin:0 27.16px;">Refactor</div>
<div class="a t" style="left:790.21px;top:24.84px;font-family:'Liberation Sans',sans-serif;font-size:30px;line-height:33.52px;color:#bbbbbb;font-weight:400;transform:scale(1.0394,1.0000);transform-origin:0 27.16px;">Run</div>
<div class="a t" style="left:878.77px;top:24.84px;font-family:'Liberation Sans',sans-serif;font-size:30px;line-height:33.52px;color:#bbbbbb;font-weight:400;transform:scale(1.0570,1.0000);transform-origin:0 27.16px;">Tools</div>
<div class="a t" style="left:983.34px;top:24.84px;font-family:'Liberation Sans',sans-serif;font-size:30px;line-height:33.52px;color:#bbbbbb;font-weight:400;transform:scale(1.1038,1.0000);transform-origin:0 27.16px;">Git</div>
<div class="a t" style="left:1058.54px;top:24.84px;font-family:'Liberation Sans',sans-serif;font-size:30px;line-height:33.52px;color:#bbbbbb;font-weight:400;transform:scale(1.0567,1.0000);transform-origin:0 27.16px;">Window</div>
<div class="a t" style="left:1202.19px;top:24.84px;font-family:'Liberation Sans',sans-serif;font-size:30px;line-height:33.52px;color:#bbbbbb;font-weight:400;transform:scale(1.0887,1.0000);transform-origin:0 27.16px;">Help</div>
<div class="a" style="left:127.8px;top:53.7px;width:15.8px;height:2.4px;background:#bbbbbb;"></div>
<div class="a" style="left:206px;top:53.7px;width:16px;height:2.4px;background:#bbbbbb;"></div>
<div class="a" style="left:289px;top:53.7px;width:20.5px;height:2.4px;background:#bbbbbb;"></div>
<div class="a" style="left:386px;top:53.7px;width:22px;height:2.4px;background:#bbbbbb;"></div>
<div class="a" style="left:540.5px;top:53.7px;width:20.5px;height:2.4px;background:#bbbbbb;"></div>
<div class="a" style="left:646.7px;top:53.7px;width:17.8px;height:2.4px;background:#bbbbbb;"></div>
<div class="a" style="left:810px;top:53.7px;width:18.3px;height:2.4px;background:#bbbbbb;"></div>
<div class="a" style="left:879.4px;top:53.7px;width:16.2px;height:2.4px;background:#bbbbbb;"></div>
<div class="a" style="left:985px;top:53.7px;width:22.8px;height:2.4px;background:#bbbbbb;"></div>
<div class="a" style="left:1058.7px;top:53.7px;width:30.3px;height:2.4px;background:#bbbbbb;"></div>
<div class="a" style="left:1204.8px;top:53.7px;width:22.2px;height:2.4px;background:#bbbbbb;"></div>
<div class="a t" style="left:1356.73px;top:24.84px;font-family:'Liberation Sans',sans-serif;font-size:30px;line-height:33.52px;color:#8a8a8a;font-weight:400;transform:scale(1.0085,1.0000);transform-origin:0 27.16px;">py3port_example - __init__.py</div>
<div class="a t" style="left:36.90px;top:107.84px;font-family:'Liberation Sans',sans-serif;font-size:30px;line-height:33.52px;color:#bbbbbb;font-weight:700;transform:scale(1.0790,1.0000);transform-origin:0 27.16px;">py3port_example</div>
<div class="a t" style="left:349.08px;top:106.84px;font-family:'Liberation Sans',sans-serif;font-size:30px;line-height:33.52px;color:#bbbbbb;font-weight:400;transform:scale(0.9862,1.0000);transform-origin:0 27.16px;">package1</div>
<div class="a t" style="left:571.43px;top:106.84px;font-family:'Liberation Sans',sans-serif;font-size:30px;line-height:33.52px;color:#6897bb;font-weight:400;transform:scale(0.9485,1.0000);transform-origin:0 27.16px;">__init__.py</div>
<div class="a t" style="left:1527.42px;top:106.84px;font-family:'Liberation Sans',sans-serif;font-size:30px;line-height:33.52px;color:#bbbbbb;font-weight:400;transform:scale(0.9875,1.0000);transform-origin:0 27.16px;">example1</div>
<div class="a t" style="left:2090.37px;top:106.44px;font-family:'Liberation Sans',sans-serif;font-size:30px;line-height:33.52px;color:#bbbbbb;font-weight:400;transform:scale(1.0836,1.0000);transform-origin:0 27.16px;">Git:</div>
<div class="a t" style="left:139.79px;top:188.14px;font-family:'Liberation Sans',sans-serif;font-size:30px;line-height:33.52px;color:#6897bb;font-weight:400;transform:scale(1.0107,1.0000);transform-origin:0 27.16px;">example1.py</div>
<div class="a t" style="left:1472.96px;top:188.14px;font-family:'Liberation Sans',sans-serif;font-size:30px;line-height:33.52px;color:#6897bb;font-weight:400;transform:scale(1.0451,1.0000);transform-origin:0 27.16px;">utilities.py</div>
<div class="a t" style="left:1474.42px;top:704.64px;font-family:'Liberation Sans',sans-serif;font-size:30px;line-height:33.52px;color:#6897bb;font-weight:400;transform:scale(0.9416,1.0000);transform-origin:0 27.16px;">__init__.py</div>
<div class="a t m" style="left:96.60px;top:253.67px;font-family:'Liberation Mono',monospace;font-size:29.828px;line-height:33.79px;color:#606366;transform:scaleY(1.07);transform-origin:0 24.83px">1</div>
<div class="a t m" style="left:96.60px;top:307.47px;font-family:'Liberation Mono',monospace;font-size:29.828px;line-height:33.79px;color:#606366;transform:scaleY(1.07);transform-origin:0 24.83px">2</div>
<div class="a t m" style="left:96.60px;top:361.27px;font-family:'Liberation Mono',monospace;font-size:29.828px;line-height:33.79px;color:#606366;transform:scaleY(1.07);transform-origin:0 24.83px">3</div>
<div class="a t m" style="left:96.60px;top:415.07px;font-family:'Liberation Mono',monospace;font-size:29.828px;line-height:33.79px;color:#606366;transform:scaleY(1.07);transform-origin:0 24.83px">4</div>
<div class="a t m" style="left:96.60px;top:468.87px;font-family:'Liberation Mono',monospace;font-size:29.828px;line-height:33.79px;color:#606366;transform:scaleY(1.07);transform-origin:0 24.83px">5</div>
<div class="a t m" style="left:96.60px;top:522.67px;font-family:'Liberation Mono',monospace;font-size:29.828px;line-height:33.79px;color:#606366;transform:scaleY(1.07);transform-origin:0 24.83px">6</div>
<div class="a t m" style="left:96.60px;top:576.47px;font-family:'Liberation Mono',monospace;font-size:29.828px;line-height:33.79px;color:#606366;transform:scaleY(1.07);transform-origin:0 24.83px">7</div>
<div class="a t m" style="left:96.60px;top:630.27px;font-family:'Liberation Mono',monospace;font-size:29.828px;line-height:33.79px;color:#606366;transform:scaleY(1.07);transform-origin:0 24.83px">8</div>
<div class="a t m" style="left:96.60px;top:684.07px;font-family:'Liberation Mono',monospace;font-size:29.828px;line-height:33.79px;color:#606366;transform:scaleY(1.07);transform-origin:0 24.83px">9</div>
<div class="a t m" style="left:78.70px;top:737.87px;font-family:'Liberation Mono',monospace;font-size:29.828px;line-height:33.79px;color:#606366;transform:scaleY(1.07);transform-origin:0 24.83px">10</div>
<div class="a t m" style="left:78.70px;top:791.67px;font-family:'Liberation Mono',monospace;font-size:29.828px;line-height:33.79px;color:#a4a3a3;transform:scaleY(1.07);transform-origin:0 24.83px">11</div>
<div class="a t m" style="left:78.70px;top:845.47px;font-family:'Liberation Mono',monospace;font-size:29.828px;line-height:33.79px;color:#606366;transform:scaleY(1.07);transform-origin:0 24.83px">12</div>
<div class="a t m" style="left:231.4px;top:253.67px;font-family:'Liberation Mono',monospace;font-size:29.828px;line-height:33.79px;transform:scaleY(1.07);transform-origin:0 24.83px;"><span style="color:#808080"># Example for porting Python 2 code to Python 3</span></div>
<div class="a t m" style="left:231.4px;top:307.47px;font-family:'Liberation Mono',monospace;font-size:29.828px;line-height:33.79px;transform:scaleY(1.07);transform-origin:0 24.83px;"><span style="color:#cc7832">from</span><span style="color:#a9b7c6"> package1 </span><span style="color:#cc7832">import</span><span style="color:#a9b7c6"> get_keys</span><span style="color:#cc7832">,</span><span style="color:#a9b7c6"> second_key</span></div>
<div class="a t m" style="left:231.4px;top:468.87px;font-family:'Liberation Mono',monospace;font-size:29.828px;line-height:33.79px;transform:scaleY(1.07);transform-origin:0 24.83px;"><span style="color:#cc7832">for</span><span style="color:#a9b7c6"> x </span><span style="color:#cc7832">in</span><span style="color:#a9b7c6"> </span><span style="color:#8888c6">range</span><span style="color:#a9b7c6">(</span><span style="color:#6897bb">4</span><span style="color:#a9b7c6">):</span></div>
<div class="a t m" style="left:231.4px;top:522.67px;font-family:'Liberation Mono',monospace;font-size:29.828px;line-height:33.79px;transform:scaleY(1.07);transform-origin:0 24.83px;"><span style="color:#a9b7c6">    </span><span style="color:#cc7832">print</span><span style="color:#a9b7c6">(x)</span></div>
<div class="a t m" style="left:231.4px;top:630.27px;font-family:'Liberation Mono',monospace;font-size:29.828px;line-height:33.79px;transform:scaleY(1.07);transform-origin:0 24.83px;"><span style="color:#a9b7c6">d = {</span><span style="color:#8fc15a">'a'</span><span style="color:#a9b7c6">: </span><span style="color:#6897bb">1</span><span style="color:#cc7832">,</span><span style="color:#a9b7c6"> </span><span style="color:#8fc15a">'b'</span><span style="color:#a9b7c6">: </span><span style="color:#6897bb">2</span><span style="color:#a9b7c6">}</span></div>
<div class="a t m" style="left:231.4px;top:737.87px;font-family:'Liberation Mono',monospace;font-size:29.828px;line-height:33.79px;transform:scaleY(1.07);transform-origin:0 24.83px;"><span style="color:#cc7832">print</span><span style="color:#a9b7c6">(get_keys(d))</span></div>
<div class="a t m" style="left:231.4px;top:791.67px;font-family:'Liberation Mono',monospace;font-size:29.828px;line-height:33.79px;transform:scaleY(1.07);transform-origin:0 24.83px;"><span style="color:#cc7832">print</span><span style="color:#a9b7c6">(second_key(d))</span></div>
<div class="a t m" style="left:1411.60px;top:253.67px;font-family:'Liberation Mono',monospace;font-size:29.828px;line-height:33.79px;color:#606366;transform:scaleY(1.07);transform-origin:0 24.83px">1</div>
<div class="a t m" style="left:1411.60px;top:307.47px;font-family:'Liberation Mono',monospace;font-size:29.828px;line-height:33.79px;color:#606366;transform:scaleY(1.07);transform-origin:0 24.83px">2</div>
<div class="a t m" style="left:1411.60px;top:361.27px;font-family:'Liberation Mono',monospace;font-size:29.828px;line-height:33.79px;color:#606366;transform:scaleY(1.07);transform-origin:0 24.83px">3</div>
<div class="a t m" style="left:1411.60px;top:415.07px;font-family:'Liberation Mono',monospace;font-size:29.828px;line-height:33.79px;color:#606366;transform:scaleY(1.07);transform-origin:0 24.83px">4</div>
<div class="a t m" style="left:1411.60px;top:468.87px;font-family:'Liberation Mono',monospace;font-size:29.828px;line-height:33.79px;color:#a4a3a3;transform:scaleY(1.07);transform-origin:0 24.83px">5</div>
<div class="a t m" style="left:1411.60px;top:522.67px;font-family:'Liberation Mono',monospace;font-size:29.828px;line-height:33.79px;color:#606366;transform:scaleY(1.07);transform-origin:0 24.83px">6</div>
<div class="a t m" style="left:1411.60px;top:576.47px;font-family:'Liberation Mono',monospace;font-size:29.828px;line-height:33.79px;color:#606366;transform:scaleY(1.07);transform-origin:0 24.83px">7</div>
<div class="a t m" style="left:1547px;top:253.67px;font-family:'Liberation Mono',monospace;font-size:29.828px;line-height:33.79px;transform:scaleY(1.07);transform-origin:0 24.83px;"><span style="color:#cc7832">def</span><span style="color:#a9b7c6"> </span><span style="color:#ffc66d">get_keys</span><span style="color:#a9b7c6">(x):</span></div>
<div class="a t m" style="left:1547px;top:307.47px;font-family:'Liberation Mono',monospace;font-size:29.828px;line-height:33.79px;transform:scaleY(1.07);transform-origin:0 24.83px;"><span style="color:#a9b7c6">    res = [x + </span><span style="color:#8fc15a">'hello'</span><span style="color:#a9b7c6"> </span><span style="color:#cc7832">for</span><span style="color:#a9b7c6"> x </span><span style="color:#cc7832">in</span><span style="color:#a9b7c6"> x.keys()]</span></div>
<div class="a t m" style="left:1547px;top:361.27px;font-family:'Liberation Mono',monospace;font-size:29.828px;line-height:33.79px;transform:scaleY(1.07);transform-origin:0 24.83px;"><span style="color:#a9b7c6">    </span><span style="color:#cc7832">return</span><span style="color:#a9b7c6"> res</span></div>
<div class="a t m" style="left:1547px;top:522.67px;font-family:'Liberation Mono',monospace;font-size:29.828px;line-height:33.79px;transform:scaleY(1.07);transform-origin:0 24.83px;"><span style="color:#cc7832">def</span><span style="color:#a9b7c6"> </span><span style="color:#ffc66d">second_key</span><span style="color:#a9b7c6">(x):</span></div>
<div class="a t m" style="left:1547px;top:576.47px;font-family:'Liberation Mono',monospace;font-size:29.828px;line-height:33.79px;transform:scaleY(1.07);transform-origin:0 24.83px;"><span style="color:#a9b7c6">    </span><span style="color:#cc7832">return</span><span style="color:#a9b7c6"> </span><span style="color:#8888c6">list</span><span style="color:#a9b7c6">(x.keys())[</span><span style="color:#6897bb">1</span><span style="color:#a9b7c6">]</span></div>
<div class="a t m" style="left:1411.60px;top:770.07px;font-family:'Liberation Mono',monospace;font-size:29.828px;line-height:33.79px;color:#606366;transform:scaleY(1.07);transform-origin:0 24.83px">1</div>
<div class="a t m" style="left:1411.60px;top:823.87px;font-family:'Liberation Mono',monospace;font-size:29.828px;line-height:33.79px;color:#a4a3a3;transform:scaleY(1.07);transform-origin:0 24.83px">2</div>
<div class="a t m" style="left:1547px;top:770.07px;font-family:'Liberation Mono',monospace;font-size:29.828px;line-height:33.79px;transform:scaleY(1.07);transform-origin:0 24.83px;"><span style="color:#cc7832">from</span><span style="color:#a9b7c6"> .module1.utilities </span><span style="color:#cc7832">import</span><span style="color:#a9b7c6"> get_keys</span><span style="color:#cc7832">,</span><span style="color:#a9b7c6"> second_k</span></div>
<div class="a t m" style="left:75px;top:1124.17px;font-family:'Liberation Mono',monospace;font-size:29.828px;line-height:33.79px;color:#bbbbbb;transform:scaleY(1.07);transform-origin:0 24.83px"> d = {'a': 1, 'b': 2}</div>
<div class="a t m" style="left:75px;top:1232.17px;font-family:'Liberation Mono',monospace;font-size:29.828px;line-height:33.79px;color:#bbbbbb;transform:scaleY(1.07);transform-origin:0 24.83px">-print(get_keys(d))</div>
<div class="a t m" style="left:75px;top:1286.17px;font-family:'Liberation Mono',monospace;font-size:29.828px;line-height:33.79px;color:#bbbbbb;transform:scaleY(1.07);transform-origin:0 24.83px">-print(second_key(d))</div>
<div class="a t m" style="left:75px;top:1340.17px;font-family:'Liberation Mono',monospace;font-size:29.828px;line-height:33.79px;color:#bbbbbb;transform:scaleY(1.07);transform-origin:0 24.83px">+print((get_keys(d)))</div>
<div class="a t m" style="left:75px;top:1394.17px;font-family:'Liberation Mono',monospace;font-size:29.828px;line-height:33.79px;color:#bbbbbb;transform:scaleY(1.07);transform-origin:0 24.83px">+print((second_key(d)))</div>
<div class="a t m" style="left:75px;top:1447.67px;font-family:'Liberation Mono',monospace;font-size:29.828px;line-height:33.79px;color:#bbbbbb;transform:scaleY(1.07);transform-origin:0 24.83px">RefactoringTool: Refactored .\package1\__init__.py</div>
<div class="a t" style="left:80.38px;top:1002.84px;font-family:'Liberation Sans',sans-serif;font-size:30px;line-height:33.52px;color:#bbbbbb;font-weight:400;transform:scale(1.0393,1.0000);transform-origin:0 27.16px;">Terminal:</div>
<div class="a t" style="left:256.60px;top:1003.84px;font-family:'Liberation Sans',sans-serif;font-size:30px;line-height:33.52px;color:#bbbbbb;font-weight:400;">Local</div>
<div class="a" style="left:224px;top:1048px;width:178px;height:8px;background:#747a80;border-radius:4px"></div>
<div class="a t" style="left:129.57px;top:1539.34px;font-family:'Liberation Sans',sans-serif;font-size:30px;line-height:33.52px;color:#bbbbbb;font-weight:400;transform:scale(0.9563,1.0000);transform-origin:0 27.16px;">Git</div>
<div class="a t" style="left:257.66px;top:1539.34px;font-family:'Liberation Sans',sans-serif;font-size:30px;line-height:33.52px;color:#bbbbbb;font-weight:400;transform:scale(0.9763,1.0000);transform-origin:0 27.16px;">Run</div>
<div class="a t" style="left:404.24px;top:1539.34px;font-family:'Liberation Sans',sans-serif;font-size:30px;line-height:33.52px;color:#bbbbbb;font-weight:400;transform:scale(0.9329,1.0000);transform-origin:0 27.16px;">TODO</div>
<div class="a t" style="left:584.13px;top:1539.34px;font-family:'Liberation Sans',sans-serif;font-size:30px;line-height:33.52px;color:#bbbbbb;font-weight:400;transform:scale(0.9878,1.0000);transform-origin:0 27.16px;">Problems</div>
<div class="a t" style="left:806.89px;top:1539.34px;font-family:'Liberation Sans',sans-serif;font-size:30px;line-height:33.52px;color:#ffffff;font-weight:400;transform:scale(1.0145,1.0000);transform-origin:0 27.16px;">Terminal</div>
<div class="a t" style="left:1025.53px;top:1539.34px;font-family:'Liberation Sans',sans-serif;font-size:30px;line-height:33.52px;color:#bbbbbb;font-weight:400;transform:scale(0.9448,1.0000);transform-origin:0 27.16px;">Python Packages</div>
<div class="a t" style="left:1351.29px;top:1539.34px;font-family:'Liberation Sans',sans-serif;font-size:30px;line-height:33.52px;color:#bbbbbb;font-weight:400;transform:scale(0.9632,1.0000);transform-origin:0 27.16px;">Python Console</div>
<div class="a t" style="left:1659.61px;top:1539.34px;font-family:'Liberation Sans',sans-serif;font-size:30px;line-height:33.52px;color:#bbbbbb;font-weight:400;transform:scale(0.9287,1.0000);transform-origin:0 27.16px;">GitLive</div>
<div class="a t" style="left:1843.74px;top:1539.34px;font-family:'Liberation Sans',sans-serif;font-size:30px;line-height:33.52px;color:#bbbbbb;font-weight:400;transform:scale(0.9321,1.0000);transform-origin:0 27.16px;">Services</div>
<div class="a t" style="left:77.04px;top:1597.34px;font-family:'Liberation Sans',sans-serif;font-size:30px;line-height:33.52px;color:#bbbbbb;font-weight:400;transform:scale(1.0504,1.0000);transform-origin:0 27.16px;">1 file committed: Correct import (58 minutes ago)</div>
<div class="a t" style="left:1674.34px;top:1597.34px;font-family:'Liberation Sans',sans-serif;font-size:30px;line-height:33.52px;color:#bbbbbb;font-weight:400;transform:scale(0.9704,1.0000);transform-origin:0 27.16px;">2:1</div>
<div class="a t" style="left:1751.64px;top:1597.34px;font-family:'Liberation Sans',sans-serif;font-size:30px;line-height:33.52px;color:#bbbbbb;font-weight:400;transform:scale(0.9048,1.0000);transform-origin:0 27.16px;">CRLF</div>
<div class="a t" style="left:1856.69px;top:1597.34px;font-family:'Liberation Sans',sans-serif;font-size:30px;line-height:33.52px;color:#bbbbbb;font-weight:400;transform:scale(1.0289,1.0000);transform-origin:0 27.16px;">UTF-8</div>
<div class="a t" style="left:1978.92px;top:1597.34px;font-family:'Liberation Sans',sans-serif;font-size:30px;line-height:33.52px;color:#bbbbbb;font-weight:400;transform:scale(0.9747,1.0000);transform-origin:0 27.16px;">4 spaces</div>
<div class="a t" style="left:2197.93px;top:1597.34px;font-family:'Liberation Sans',sans-serif;font-size:30px;line-height:33.52px;color:#bbbbbb;font-weight:400;transform:scale(1.0283,1.0000);transform-origin:0 27.16px;">Python 2.7 (ipkiss3) (7)</div>
<div class="a t" style="left:2595.57px;top:1597.34px;font-family:'Liberation Sans',sans-serif;font-size:30px;line-height:33.52px;color:#bbbbbb;font-weight:400;transform:scale(1.0431,1.0000);transform-origin:0 27.16px;">master</div>
<svg class="a" style="left:0;top:0" width="2794" height="1643"><line x1="717" y1="587.5" x2="502.1" y2="526.5" stroke="#c4c4c4" stroke-width="2.2"/><polygon points="476,519.4 505.5,514 498.6,538.9" fill="#bdbdbd"/><line x1="573" y1="941.8" x2="347.0" y2="836.8" stroke="#c4c4c4" stroke-width="2.2"/><polygon points="322.5,826.5 352.3,825 341.6,848.6" fill="#bdbdbd"/><line x1="476" y1="1267.5" x2="745.8" y2="1045.2" stroke="#c4c4c4" stroke-width="2.2"/><polygon points="766.4,1027 737.6,1036 754,1054.4" fill="#bdbdbd"/><line x1="2264" y1="411.3" x2="2204.0" y2="365.4" stroke="#c4c4c4" stroke-width="2.2"/><polygon points="2183.5,348.4 2212.4,355.8 2195.6,375" fill="#bdbdbd"/><line x1="1867" y1="1019" x2="1703.6" y2="850.4" stroke="#c4c4c4" stroke-width="2.2"/><polygon points="1685,830 1712.9,841.4 1694.3,859.4" fill="#bdbdbd"/></svg>
<div class="a" style="left:717px;top:517px;width:562px;height:143px;background:#bcbcc0;border:5px solid #8a8a8a;border-radius:26px;box-sizing:border-box"></div>
<div class="a" style="left:573px;top:871px;width:641px;height:144px;background:#d9dc9a;border:5px solid #8a8a8a;border-radius:26px;box-sizing:border-box"></div>
<div class="a" style="left:2067px;top:411px;width:725px;height:180px;background:#d9dc9a;border:5px solid #8a8a8a;border-radius:26px;box-sizing:border-box"></div>
<div class="a" style="left:1867px;top:961px;width:563px;height:144px;background:#bcbcc0;border:5px solid #8a8a8a;border-radius:26px;box-sizing:border-box"></div>
<div class="a t" style="left:815.72px;top:521.89px;font-family:'Liberation Sans',sans-serif;font-size:58px;line-height:64.80px;color:#16154f;font-weight:400;">xrange -&gt; range</div>
<div class="a t" style="left:813.99px;top:588.19px;font-family:'Liberation Sans',sans-serif;font-size:58px;line-height:64.80px;color:#16154f;font-weight:400;transform:scale(1.0635,1.0000);transform-origin:0 52.51px;">print with ()</div>
<div class="a t" style="left:614.35px;top:909.09px;font-family:'Liberation Sans',sans-serif;font-size:58px;line-height:64.80px;color:#16154f;font-weight:400;transform:scale(1.0015,1.0000);transform-origin:0 52.51px;">Extra () not needed</div>
<div class="a t" style="left:2108.12px;top:433.19px;font-family:'Liberation Sans',sans-serif;font-size:58px;line-height:64.80px;color:#16154f;font-weight:400;transform:scale(1.0290,1.0000);transform-origin:0 52.51px;">list() not strictly needed</div>
<div class="a t" style="left:2112.00px;top:499.69px;font-family:'Liberation Sans',sans-serif;font-size:58px;line-height:64.80px;color:#16154f;font-weight:400;transform:scale(1.0412,1.0000);transform-origin:0 52.51px;">when iterating</div>
<div class="a t" style="left:1969.06px;top:999.19px;font-family:'Liberation Sans',sans-serif;font-size:58px;line-height:64.80px;color:#16154f;font-weight:400;transform:scale(1.0461,1.0000);transform-origin:0 52.51px;">relative imports</div>
<svg class="a" style="left:761px;top:533px;" width="37" height="42" viewBox="0 0 37 42"><path d="M1.9 26.0 L14.1 39.9 L35.1 2.1" fill="none" stroke="#00b050" stroke-width="4" stroke-linecap="round" stroke-linejoin="round"/></svg>
<svg class="a" style="left:761px;top:599px;" width="37" height="42" viewBox="0 0 37 42"><path d="M1.9 26.0 L14.1 39.9 L35.1 2.1" fill="none" stroke="#00b050" stroke-width="4" stroke-linecap="round" stroke-linejoin="round"/></svg>
<svg class="a" style="left:1917px;top:1010px;" width="37" height="41" viewBox="0 0 37 41"><path d="M1.9 25.4 L14.1 38.9 L35.1 2.1" fill="none" stroke="#00b050" stroke-width="4" stroke-linecap="round" stroke-linejoin="round"/></svg>
</body></html>
